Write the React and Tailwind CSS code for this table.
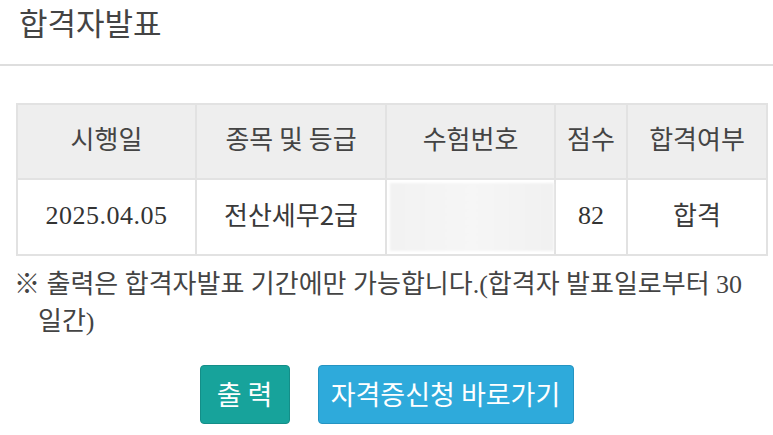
import React from 'react';

const sans = { fontFamily: '"Noto Sans CJK KR", "Noto Sans", sans-serif' };
const mixed = { fontFamily: '"Liberation Serif", "Noto Sans CJK KR", serif' };

const cols = [
  { label: '시행일', w: 'w-[179px]' },
  { label: '종목 및 등급', w: 'w-[190px]' },
  { label: '수험번호', w: 'w-[160px]' },
  { label: '점수', w: 'w-[72px]' },
  { label: '합격여부', w: 'w-[140px]' },
];

export default function App() {
  return (
    <div className="w-[773px] h-[435px] bg-white text-[#333] overflow-hidden" style={mixed}>
      {/* Title bar */}
      <div className="h-[66px] border-b-2 border-[#dedede]">
        <h1
          className="pl-[19px] text-[31px] leading-[44px] font-normal text-[#444]"
          style={sans}
        >
          합격자발표
        </h1>
      </div>

      {/* Result table */}
      <div className="pl-[16px] pt-[37px]">
        <table className="border-collapse border-2 border-[#e2e2e2] text-[26px]">
          <thead>
            <tr className="h-[75px] bg-[#eeeeee]">
              {cols.map((c) => (
                <th
                  key={c.label}
                  className={`${c.w} border-2 border-[#e2e2e2] pb-[8px] font-normal text-[#444] text-center`}
                  style={sans}
                >
                  {c.label}
                </th>
              ))}
            </tr>
          </thead>
          <tbody>
            <tr className="h-[72px]">
              <td className="border-2 border-[#e2e2e2] pb-[4px] text-center tracking-[0.5px]">2025.04.05</td>
              <td className="border-2 border-[#e2e2e2] pb-[7px] text-center text-[#3a3a3a]" style={sans}>전산세무2급</td>
              <td className="border-2 border-[#e2e2e2] p-[3px] pr-0">
                <div className="h-[68px] w-[164px] bg-gradient-to-r from-[#f2f2f2] via-[#f6f6f6] to-[#f1f1f1] blur-[1px]" />
              </td>
              <td className="border-2 border-[#e2e2e2] pb-[4px] text-center">82</td>
              <td className="border-2 border-[#e2e2e2] pb-[7px] text-center text-[#3a3a3a]" style={sans}>합격</td>
            </tr>
          </tbody>
        </table>
      </div>

      {/* Notice */}
      <p className="mt-[10px] pl-[38px] pr-[16px] -indent-[24px] text-[26px] leading-[37px] text-[#444]">
        ※ 출력은 합격자발표 기간에만 가능합니다.(합격자 발표일로부터 30 일간)
      </p>

      {/* Buttons */}
      <div className="mt-[25px] flex justify-center gap-[28px]">
        <button
          className="w-[90px] h-[59px] rounded-[4px] border border-[#148e88] bg-[#17a39b] text-white text-[27px]"
          style={sans}
        >
          출 력
        </button>
        <button
          className="w-[256px] h-[59px] rounded-[4px] border border-[#2594c2] bg-[#2eaadb] text-white text-[27px]"
          style={sans}
        >
          자격증신청 바로가기
        </button>
      </div>
    </div>
  );
}
